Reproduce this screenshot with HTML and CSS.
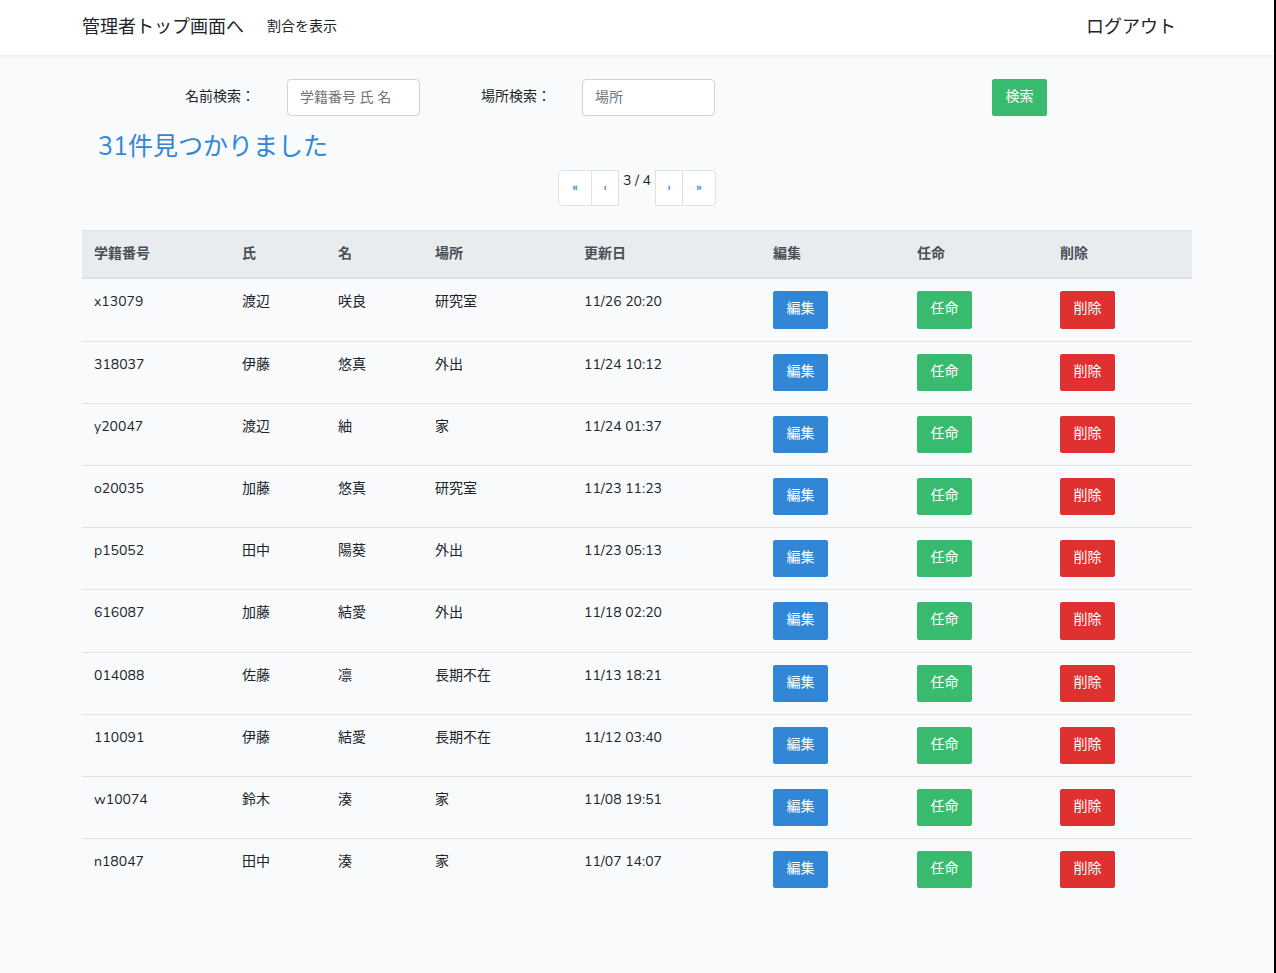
FILE: index.html
```html
<!DOCTYPE html>
<html lang="ja">
<head>
<meta charset="utf-8">
<title>管理者</title>
<link rel="stylesheet" href="styles.css">
</head>
<body>
<nav class="navbar">
  <div class="container nav-inner">
    <a class="brand" href="#">管理者トップ画面へ</a>
    <a class="nav-link" href="#">割合を表示</a>
    <span class="spacer"></span>
    <a class="logout" href="#">ログアウト</a>
  </div>
</nav>
<main class="container main">
  <form class="search">
    <label class="lbl lbl-name">名前検索：</label>
    <input class="input" type="text" placeholder="学籍番号 氏 名">
    <label class="lbl lbl-place">場所検索：</label>
    <input class="input" type="text" placeholder="場所">
    <button class="btn btn-success btn-search" type="button">検索</button>
  </form>
  <h4 class="count">31件見つかりました</h4>
  <div class="pager-wrap">
    <div class="pager">
      <a class="page first" href="#">«</a>
      <a class="page" href="#">‹</a>
      <span class="page-num">3 / 4</span>
      <a class="page" href="#">›</a>
      <a class="page last" href="#">»</a>
    </div>
  </div>
  <table class="table">
    <colgroup>
      <col class="c1"><col class="c2"><col class="c3"><col class="c4"><col class="c5"><col class="c6"><col class="c7"><col class="c8">
    </colgroup>
    <thead>
      <tr><th>学籍番号</th><th>氏</th><th>名</th><th>場所</th><th>更新日</th><th>編集</th><th>任命</th><th>削除</th></tr>
    </thead>
    <tbody>
      <tr><td>x13079</td><td>渡辺</td><td>咲良</td><td>研究室</td><td>11/26 20:20</td><td><a class="btn btn-primary">編集</a></td><td><a class="btn btn-success">任命</a></td><td><a class="btn btn-danger">削除</a></td></tr>
      <tr><td>318037</td><td>伊藤</td><td>悠真</td><td>外出</td><td>11/24 10:12</td><td><a class="btn btn-primary">編集</a></td><td><a class="btn btn-success">任命</a></td><td><a class="btn btn-danger">削除</a></td></tr>
      <tr><td>y20047</td><td>渡辺</td><td>紬</td><td>家</td><td>11/24 01:37</td><td><a class="btn btn-primary">編集</a></td><td><a class="btn btn-success">任命</a></td><td><a class="btn btn-danger">削除</a></td></tr>
      <tr><td>o20035</td><td>加藤</td><td>悠真</td><td>研究室</td><td>11/23 11:23</td><td><a class="btn btn-primary">編集</a></td><td><a class="btn btn-success">任命</a></td><td><a class="btn btn-danger">削除</a></td></tr>
      <tr><td>p15052</td><td>田中</td><td>陽葵</td><td>外出</td><td>11/23 05:13</td><td><a class="btn btn-primary">編集</a></td><td><a class="btn btn-success">任命</a></td><td><a class="btn btn-danger">削除</a></td></tr>
      <tr><td>616087</td><td>加藤</td><td>結愛</td><td>外出</td><td>11/18 02:20</td><td><a class="btn btn-primary">編集</a></td><td><a class="btn btn-success">任命</a></td><td><a class="btn btn-danger">削除</a></td></tr>
      <tr><td>014088</td><td>佐藤</td><td>凛</td><td>長期不在</td><td>11/13 18:21</td><td><a class="btn btn-primary">編集</a></td><td><a class="btn btn-success">任命</a></td><td><a class="btn btn-danger">削除</a></td></tr>
      <tr><td>110091</td><td>伊藤</td><td>結愛</td><td>長期不在</td><td>11/12 03:40</td><td><a class="btn btn-primary">編集</a></td><td><a class="btn btn-success">任命</a></td><td><a class="btn btn-danger">削除</a></td></tr>
      <tr><td>w10074</td><td>鈴木</td><td>湊</td><td>家</td><td>11/08 19:51</td><td><a class="btn btn-primary">編集</a></td><td><a class="btn btn-success">任命</a></td><td><a class="btn btn-danger">削除</a></td></tr>
      <tr><td>n18047</td><td>田中</td><td>湊</td><td>家</td><td>11/07 14:07</td><td><a class="btn btn-primary">編集</a></td><td><a class="btn btn-success">任命</a></td><td><a class="btn btn-danger">削除</a></td></tr>
    </tbody>
  </table>
</main>
</body>
</html>
```
FILE: styles.css
```css
html {
  background: #000;
}
body {
  margin: 0 2px 0 0;
  min-height: 973px;
  background: #f8fafc;
  color: #212529;
  font-family: "Nunito", "Noto Sans", "Noto Sans CJK JP", sans-serif;
  font-size: 14px;
  line-height: 1.6;
}
a { text-decoration: none; color: inherit; }
.container {
  width: 1110px;
  margin: 0 auto;
  box-sizing: border-box;
}
.navbar {
  background: #fff;
  box-shadow: 0 1px 3px rgba(0,0,0,0.08);
  height: 55px;
}
.nav-inner {
  display: flex;
  align-items: center;
  height: 55px;
}
.brand {
  font-size: 18px;
  color: #212529;
  margin-right: 15px;
}
.nav-link {
  font-size: 14px;
  padding: 8px 8px;
  color: #212529;
}
.spacer { flex: 1; }
.logout {
  font-size: 18px;
  color: #212529;
  margin-right: 16px;
}
.main {
  padding-top: 24px;
}
.search {
  display: flex;
  align-items: center;
  height: 37px;
  padding-left: 103px;
}
.lbl {
  font-size: 14px;
  color: #212529;
}
.lbl-name { width: 102px; }
.lbl-place { width: 101px; margin-left: 61px; }
.input {
  width: 133px;
  height: 37px;
  box-sizing: border-box;
  border: 1px solid #ced4da;
  border-radius: 4px;
  background: #fff;
  padding: 6px 12px;
  font-family: inherit;
  font-size: 14px;
  color: #495057;
}
.input::placeholder { color: #6c757d; }
.btn {
  display: inline-block;
  box-sizing: border-box;
  height: 37px;
  width: 55px;
  padding: 6px 0;
  text-align: center;
  font-size: 14px;
  line-height: 1.6;
  color: #fff;
  border-radius: 2px;
  border: 1px solid transparent;
  font-family: inherit;
  cursor: pointer;
}
.table td .btn { height: 37.2px; vertical-align: top; }
.btn-search { margin-left: 277px; }
.btn-primary { background: #3187d6; border-color: #3187d6; }
.btn-success { background: #38bb6e; border-color: #38bb6e; }
.btn-danger { background: #e03131; border-color: #e03131; }
.count {
  margin: 16px 0 0 16px;
  font-size: 25px;
  font-weight: 400;
  line-height: 30px;
  color: #3187d6;
}
.pager-wrap {
  display: flex;
  justify-content: center;
  margin-top: 8px;
}
.pager {
  display: flex;
  align-items: flex-start;
}
.page {
  display: flex;
  align-items: center;
  justify-content: center;
  box-sizing: border-box;
  height: 36px;
  width: 28px;
  background: #fff;
  border: 1px solid #dee2e6;
  color: #3187d6;
  font-size: 11px;
  font-weight: 700;
}
.page + .page { margin-left: -1px; }
.first { width: 34px; border-radius: 4px 0 0 4px; }
.last { width: 34px; border-radius: 0 4px 4px 0; }
.page-num {
  padding: 0 4px;
  line-height: 22px;
  font-size: 14px;
}
.table {
  width: 1110px;
  margin-top: 24px;
  border-collapse: collapse;
  table-layout: fixed;
}
.c1 { width: 148px; }
.c2 { width: 96px; }
.c3 { width: 97px; }
.c4 { width: 149px; }
.c5 { width: 189px; }
.c6 { width: 144px; }
.c7 { width: 143px; }
.c8 { width: 144px; }
.table th {
  text-align: left;
  background: #e9ecef;
  color: #495057;
  font-weight: 700;
  padding: 12px;
  border-top: 1px solid #dee2e6;
  border-bottom: 2px solid #dee2e6;
  line-height: 22.4px;
}
.table td {
  padding: 12px;
  border-top: 1px solid #dee2e6;
  vertical-align: top;
  line-height: 22.4px;
}
.table tbody tr:first-child td { border-top: 0; }
```
